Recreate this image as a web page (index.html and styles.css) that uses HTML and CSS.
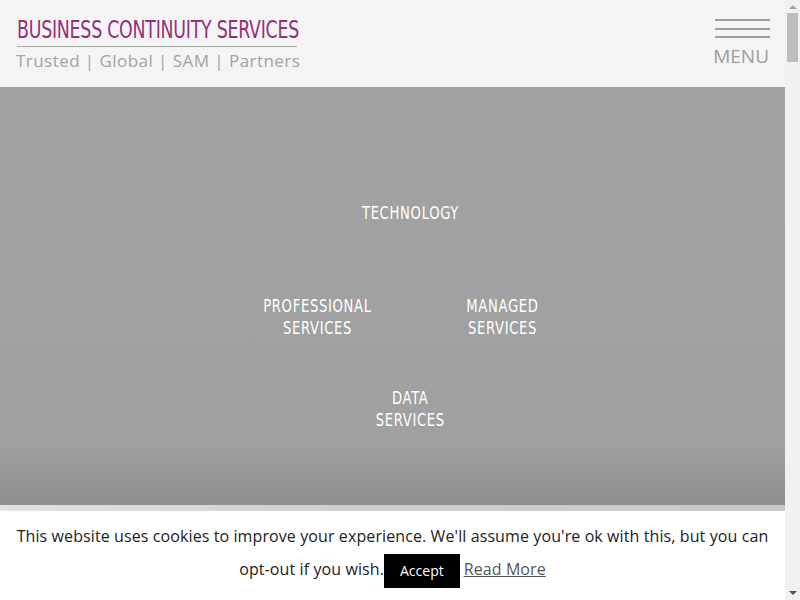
FILE: index.html
```html
<!DOCTYPE html>
<html>
<head>
<meta charset="utf-8">
<link rel="stylesheet" href="styles.css">
</head>
<body>
<div class="main">
  <header class="header">
    <div class="brand">
      <div class="brand-title"><span>BUSINESS CONTINUITY SERVICES</span></div>
      <div class="brand-tag">Trusted | Global | SAM | Partners</div>
    </div>
    <div class="menu">
      <div class="burger"><span></span><span></span><span></span></div>
      <div class="menu-label">MENU</div>
    </div>
  </header>
  <section class="hero">
    <div class="diamond">
      <div class="row"><div class="item">TECHNOLOGY</div></div>
      <div class="row pair"><div class="item">PROFESSIONAL<br>SERVICES</div><div class="item">MANAGED<br>SERVICES</div></div>
      <div class="row last"><div class="item">DATA<br>SERVICES</div></div>
    </div>
  </section>
  <div class="strip"></div>
  <section class="more"></section>
  <div class="cookie">
    <p class="cookie-text">This website uses cookies to improve your experience. We'll assume you're ok with this, but you can opt-out if you wish.<span class="accept">Accept</span><a class="read" href="#">Read More</a></p>
  </div>
</div>
<div class="scrollbar">
  <div class="arrow up"></div>
  <div class="thumb"></div>
  <div class="track"></div>
  <div class="arrow down"></div>
</div>
</body>
</html>
```
FILE: styles.css
```css
html, body { margin: 0; padding: 0; height: 100%; overflow: hidden; }
body { background: #fff; font-family: "Open Sans", sans-serif; display: flex; }
.main { flex: 1; min-width: 0; height: 100%; overflow: hidden; position: relative; }
.header {
  height: 87px;
  background: #f4f4f4;
  display: flex;
  justify-content: space-between;
  align-items: flex-start;
  padding: 0 15px 0 16px;
}
.brand { padding-top: 17px; }
.brand-title {
  width: 280px;
  margin-left: 1px;
  border-bottom: 1px solid #a9a9a9;
  padding-bottom: 2px;
  height: 27px;
  white-space: nowrap;
}
.brand-title span {
  display: inline-block;
  font-family: "DejaVu Sans Condensed", "DejaVu Sans", sans-serif;
  font-size: 24px;
  line-height: 27px;
  color: #93307a;
  letter-spacing: -0.3px;
  transform: scaleX(0.805);
  transform-origin: left center;
}
.brand-tag {
  font-size: 17px;
  line-height: 24px;
  color: #a3a3a3;
  letter-spacing: 0.45px;
  margin-top: 2px;
}
.menu { padding-top: 19px; display: flex; flex-direction: column; align-items: flex-end; }
.burger { width: 55px; display: flex; flex-direction: column; gap: 6.5px; }
.burger span { display: block; height: 2px; background: #9d9d9d; }
.menu-label { font-size: 19px; line-height: 24px; color: #9d9d9d; margin-top: 6px; margin-right: 1px; }
.hero {
  height: 418px;
  background: linear-gradient(to bottom, #a2a2a2 0%, #a0a0a0 86%, #8e8e8e 100%);
  display: flex;
  justify-content: center;
  padding-left: 35px;
  box-sizing: border-box;
  padding-top: 115px;
}
.diamond { display: flex; flex-direction: column; align-items: center; }
.row { display: flex; justify-content: center; }
.row + .row { margin-top: 71px; }
.row.last { margin-top: 48px; }
.pair .item { width: 185px; }
.item {
  font-family: "DejaVu Sans Condensed", "DejaVu Sans", sans-serif;
  color: #fff;
  font-size: 17px;
  line-height: 22px;
  letter-spacing: 0.8px;
  text-align: center;
  transform: scaleX(0.86);
}
.strip { height: 6px; background: linear-gradient(to right, #e2e2e2, #d0d0d0 40%, #c8c8c8); }
.more { height: 500px; background: #fff; }
.cookie {
  position: absolute;
  left: 0; right: 0; bottom: 0;
  height: 89px;
  background: #fff;
  display: flex;
  justify-content: center;
  align-items: flex-start;
}
.cookie-text {
  margin: 9px 0 0;
  font-size: 16px;
  line-height: 33px;
  color: #222;
  text-align: center;
  width: 770px;
  letter-spacing: 0.1px;
}
.accept {
  display: inline-block;
  background: #000;
  color: #fff;
  font-size: 14px;
  line-height: 20px;
  padding: 7px 16px;
  margin: 0 4px 0 0;
  vertical-align: middle;
  letter-spacing: 0;
}
.read { color: #555; text-decoration: underline; }
.scrollbar {
  width: 15px;
  height: 100%;
  background: #f1f1f1;
  display: flex;
  flex-direction: column;
  align-items: center;
}
.arrow { width: 0; height: 0; border-left: 4px solid transparent; border-right: 4px solid transparent; }
.arrow.up { border-bottom: 4px solid #a3a3a3; margin-top: 5px; margin-bottom: 4px; }
.arrow.down { border-top: 4px solid #505050; margin-bottom: 5px; margin-top: 4px; }
.thumb { width: 11px; height: 49px; background: #bdbdbd; }
.track { flex: 1; }
```
